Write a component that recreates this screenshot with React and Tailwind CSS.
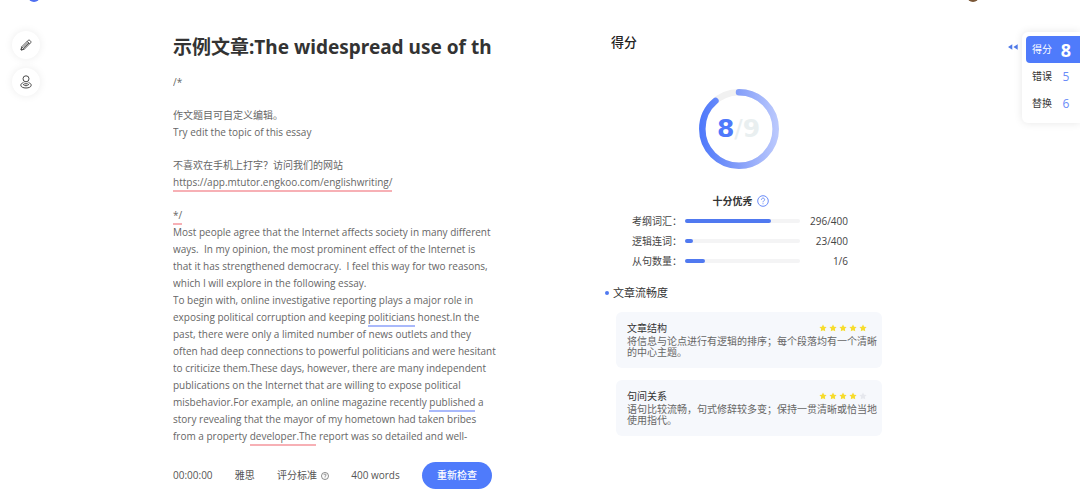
import React, { useState } from 'react';

const notes = ['/*', '作文题目可自定义编辑。\nTry edit the topic of this essay'];

const opening = [
  'Most people agree that the Internet affects society in many different',
  'ways.  In my opinion, the most prominent effect of the Internet is',
  'that it has strengthened democracy.  I feel this way for two reasons,',
  'which I will explore in the following essay.',
];

const metrics = [
  { label: '考纲词汇：', value: 296, total: 400, fill: 75 },
  { label: '逻辑连词：', value: 23, total: 400, fill: 7 },
  { label: '从句数量：', value: 1, total: 6, fill: 17 },
];

const reviews = [
  {
    title: '文章结构',
    stars: 5,
    text: '将信息与论点进行有逻辑的排序；每个段落均有一个清晰的中心主题。',
  },
  {
    title: '句间关系',
    stars: 4,
    text: '语句比较流畅，句式修辞较多变；保持一贯清晰或恰当地使用指代。',
  },
];

const tabs = [
  { id: 'score', label: '得分', count: 8 },
  { id: 'errors', label: '错误', count: 5 },
  { id: 'replace', label: '替换', count: 6 },
];

const Mark = ({ tone = 'red', children }) => (
  <span
    className={`border-b-2 pb-px ${tone === 'blue' ? 'border-[#a9b9fb]' : 'border-[#f7b0b5]'}`}
  >
    {children}
  </span>
);

const PencilIcon = () => (
  <svg viewBox="0 0 12 12" className="h-3 w-3" fill="none" stroke="#4a4a4a" strokeWidth="0.9" strokeLinejoin="round">
    <path d="M1 11 1.7 7.8 8.2 1.3Q9 .6 9.9 1.4L10.6 2.1Q11.4 3 10.7 3.8L4.2 10.3Z" />
    <path d="M1.7 7.8 4.2 10.3M7.2 2.3 9.7 4.8M3 8.5 8.3 3.2M3.8 9.3 9 4" />
    <path d="M1 11 1.4 9.4 2.6 10.6Z" fill="#4a4a4a" />
  </svg>
);

const PersonIcon = () => (
  <svg viewBox="0 0 12 14" className="h-3.5 w-3" fill="none" stroke="#4a4a4a" strokeWidth="1">
    <circle cx="6" cy="3.8" r="3" />
    <path d="M3.5 7.6C1.8 8.1.8 9 .8 10.2.8 12 3.2 13 6 13s5.2-1 5.2-2.8c0-1.2-1-2.1-2.7-2.6" />
    <path d="M3 9.4Q6 12.4 9 9.4M4.3 8.2Q6 9.8 7.7 8.2" />
  </svg>
);

const HelpIcon = ({ className }) => (
  <svg viewBox="0 0 12 12" className={className} fill="none" stroke="currentColor">
    <circle cx="6" cy="6" r="5.3" />
    <path d="M4.4 4.7C4.4 2.6 7.6 2.6 7.6 4.6 7.6 5.8 6 5.9 6 7.3M6 8.3V9.2" />
  </svg>
);

const Star = ({ on }) => (
  <svg viewBox="0 0 10 10" className={`h-2 w-2 ${on ? 'text-[#f7dc2d]' : 'text-[#e6e8ee]'}`} fill="currentColor">
    <path d="M5 .7 6.4 3.4 9.5 3.9 7.3 6 7.8 9.1 5 7.7 2.2 9.1 2.7 6 .5 3.9 3.6 3.4Z" />
  </svg>
);

const ScoreRing = () => (
  <div className="relative h-20 w-20">
    <svg viewBox="0 0 80 80" className="h-20 w-20" fill="none" strokeWidth="6.5">
      <defs>
        {/* the circle is turned a quarter, so y runs left to right here */}
        <linearGradient id="ring" gradientUnits="userSpaceOnUse" x1="0" y1="2" x2="0" y2="78">
          <stop offset="0" stopColor="#4f79fb" />
          <stop offset="0.5" stopColor="#859ff9" />
          <stop offset="1" stopColor="#bac8fd" />
        </linearGradient>
      </defs>
      <circle cx="40" cy="40" r="36.7" stroke="#f1f1f1" />
      <circle
        cx="40"
        cy="40"
        r="36.7"
        stroke="url(#ring)"
        strokeLinecap="round"
        pathLength="9"
        strokeDasharray="8 1"
        transform="rotate(-90 40 40)"
      />
    </svg>
    <div className="absolute inset-0 flex items-center justify-center font-['DejaVu_Sans'] text-[25px] font-bold text-[#e9eff0]">
      <span className="text-[#4f79fb]">8</span>
      <span className="font-normal">/</span>
      <span>9</span>
    </div>
  </div>
);

const Editor = () => {
  const [title, setTitle] = useState('示例文章:The widespread use of the Internet');

  return (
    <section className="min-w-0 pt-7">
      <input
        aria-label="Title"
        value={title}
        onChange={(e) => setTitle(e.target.value)}
        className="block h-8 w-full bg-transparent font-['Noto_Sans','Noto_Sans_CJK_SC',sans-serif] text-[19px] font-bold text-[#333] outline-none"
      />
      <div className="mt-3 -mr-2 h-[374px] overflow-hidden whitespace-pre text-[10px] leading-[17px] text-[#666]">
        {notes.map((note) => (
          <p key={note} className="mb-4">{note}</p>
        ))}
        <p className="mb-4">
          不喜欢在手机上打字？访问我们的网站{'\n'}
          <a href="https://app.mtutor.engkoo.com/englishwriting/">
            <Mark>https:</Mark>
            <Mark>//app.mtutor.engkoo.com/englishwriting/</Mark>
          </a>
        </p>
        <p><Mark>*/</Mark></p>
        <p>{opening.join('\n')}</p>
        <p>
          {'To begin with, online investigative reporting plays a major role in\nexposing political corruption and keeping '}
          <Mark tone="blue">politicians</Mark>
          {' honest.In the\npast, there were only a limited number of news outlets and they\noften had deep connections to powerful politicians and were hesitant\nto criticize them.These days, however, there are many independent\npublications on the Internet that are willing to expose political\nmisbehavior.For example, an online magazine recently '}
          <Mark tone="blue">published</Mark>
          {' a\nstory revealing that the mayor of my hometown had taken bribes\nfrom a property '}
          <Mark>developer.The</Mark>
          {' report was so detailed and well-'}
        </p>
      </div>
      <footer className="mt-3.5 flex items-center justify-between text-[10px] text-[#555]">
        <span>00:00:00</span>
        <span>雅思</span>
        <span className="flex items-center gap-1">
          评分标准
          <HelpIcon className="h-2 w-2" />
        </span>
        <span>400 words</span>
        <button className="h-[27px] w-[70px] rounded-full bg-[#4f7bfb] font-medium text-white">重新检查</button>
      </footer>
    </section>
  );
};

const ScorePanel = () => (
  <section className="min-w-0 pt-7">
    <h2 className="pl-1.5 text-[13px] leading-6 font-medium text-[#222]">得分</h2>
    <div className="mt-[35px] flex flex-col items-center pr-2.5">
      <ScoreRing />
      <p className="mt-6 flex items-center gap-1 pl-1 text-[10px] leading-4 font-bold text-[#333]">
        十分优秀
        <HelpIcon className="h-3 w-3 text-[#6a8cf8]" />
      </p>
    </div>
    <dl className="mt-0.5 pr-8 pl-[27px] text-[10px] leading-5 text-[#444]">
      {metrics.map((m) => (
        <div key={m.label} className="flex items-center">
          <dt className="w-[53px]">{m.label}</dt>
          <dd className="flex flex-1 items-center">
            <span className="h-1 flex-1 rounded-full bg-[#f4f4f5]">
              <span className="block h-1 rounded-full bg-[#5079f0]" style={{ width: `${m.fill}%` }} />
            </span>
            <span className="w-[50px] pr-0.5 text-right">{m.value}/{m.total}</span>
          </dd>
        </div>
      ))}
    </dl>
    <h3 className="mt-3 flex items-center gap-1 text-[11px] leading-5 text-[#333]">
      <span className="h-1 w-1 rounded-full bg-[#5079f0]" />
      文章流畅度
    </h3>
    <div className="mt-[9px] space-y-3 pl-[11px]">
      {reviews.map((r) => (
        <article key={r.title} className="rounded-md bg-[#f6f8fc] pt-2 pr-[5px] pb-2.5 pl-[11px]">
          <div className="flex items-center justify-between text-[10px] leading-4 text-[#333]">
            <h4>{r.title}</h4>
            <div className="flex gap-0.5 pr-2.5">
              {[1, 2, 3, 4, 5].map((n) => (
                <Star key={n} on={n <= r.stars} />
              ))}
            </div>
          </div>
          <p className="text-[10px] leading-[11px] text-[#666]">{r.text}</p>
        </article>
      ))}
    </div>
  </section>
);

const SideTabs = () => {
  const [active, setActive] = useState('score');

  return (
    <aside className="flex items-start justify-end gap-1 pt-7.5">
      <button aria-label="Collapse" className="mt-3 text-[#4f79e8]">
        <svg viewBox="0 0 10 6" className="h-1.5 w-2.5" fill="currentColor">
          <path d="M4.3.3V5.7L0 3ZM9.7.3V5.7L5.4 3Z" />
        </svg>
      </button>
      <nav className="flex w-[58px] flex-col rounded-l-md bg-white pt-1 pb-1.5 pl-1 shadow-[0_0_8px_rgba(0,0,0,0.1)]">
        {tabs.map((t) => (
          <button
            key={t.id}
            onClick={() => setActive(t.id)}
            className={`flex h-[27px] items-center rounded-l-sm pl-1.5 text-[10px] ${
              active === t.id ? 'bg-[#4f7bfb] text-white' : 'text-[#333]'
            }`}
          >
            {t.label}
            <span
              className={`ml-1.5 w-4 text-center ${
                active === t.id ? 'text-lg font-bold' : 'text-xs text-[#6a8cf8]'
              }`}
            >
              {t.count}
            </span>
          </button>
        ))}
      </nav>
    </aside>
  );
};

const roundButton =
  'flex h-7 w-7 items-center justify-center rounded-full bg-white shadow-[0_0_8px_rgba(0,0,0,0.08)]';

export default function App() {
  return (
    <div className="min-h-screen overflow-hidden bg-white font-['Open_Sans','Noto_Sans_CJK_SC',sans-serif]">
      <header className="flex h-0.5 items-end justify-between overflow-hidden pr-[101px] pl-7">
        <span className="h-3 w-3 shrink-0 rounded-full bg-[#4f6ff0]" />
        <span className="h-3 w-3 shrink-0 rounded-full bg-[#7a5636]" />
      </header>
      <main className="grid grid-cols-[173fr_319fr_113fr_277fr_198fr]">
        <nav className="flex flex-col gap-[9px] pt-[29px] pl-3">
          <button aria-label="Edit" className={roundButton}>
            <PencilIcon />
          </button>
          <button aria-label="Profile" className={roundButton}>
            <PersonIcon />
          </button>
        </nav>
        <Editor />
        <div />
        <ScorePanel />
        <SideTabs />
      </main>
    </div>
  );
}
